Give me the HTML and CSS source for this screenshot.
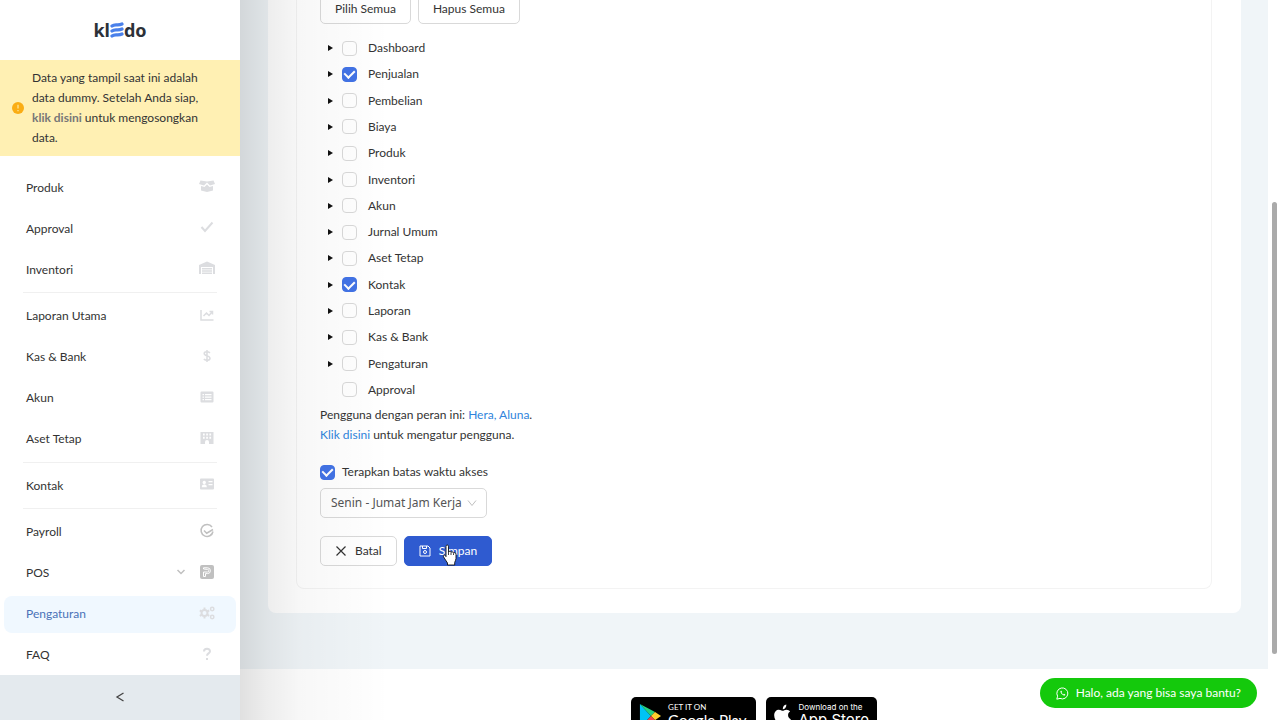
FILE: index.html
```html
<!DOCTYPE html>
<html lang="id">
<head>
  <meta charset="UTF-8" />
  <title>Kledo - Pengaturan Peran</title>
  <meta name="viewport" content="width=device-width, initial-scale=1.0" />
  <link rel="stylesheet" href="styles.css">
</head>
<body>
  <aside class="sidebar">
    <a class="logo" href="#" aria-label="kledo">
      <span>kl</span>
      <svg width="14" height="16" viewBox="0 0 14 16" fill="none" stroke="#4a80ea" stroke-width="3.2" stroke-linecap="round"><path d="M2 4C5 1.500 8 4.200 12 2M2 9C5 6.500 8 9.200 12 7M2 14C5 11.500 8 14.200 12 12"/></svg>
      <span>do</span>
    </a>

    <div class="notice">
      <svg class="notice-icon" width="12" height="12" viewBox="0 0 12 12"><circle cx="6" cy="6" r="6" fill="#faad14"/><path d="M6 2.800v3.800M6 8v1.200" stroke="#fff0b0" stroke-width="1.100"/></svg>
      <p>Data yang tampil saat ini adalah data dummy. Setelah Anda siap, <a href="#">klik disini</a> untuk mengosongkan data.</p>
    </div>

    <nav class="menu">
      <a class="menu-item" href="#"><span>Produk</span>
        <svg viewBox="0 0 16 16"><path d="M1.500 2.500L8 3.500l6.500-1L16 6l-5 1.500L8 4.500l-3 3L0 6zM2 8l3.500 1L8 6.500 10.500 9 14 8v4.500L8 14l-6-1.500z"/></svg></a>
      <a class="menu-item" href="#"><span>Approval</span>
        <svg viewBox="0 0 16 16"><path class="line thick" d="M2.500 8l3.500 4 7.500-8.500"/></svg></a>
      <a class="menu-item" href="#"><span>Inventori</span>
        <svg viewBox="0 0 16 16"><path d="M0 5l8-3.500L16 5v9h-2V7H2v7H0zM3 8h10v1.500H3zM3 10.300h10v1.500H3zM3 12.600h10V14H3z"/></svg></a>
      <hr>
      <a class="menu-item" href="#"><span>Laporan Utama</span>
        <svg viewBox="0 0 16 16"><path class="line" d="M2 3v10h12.500M4.500 9l3-3 2.500 2.500L13 5M10.500 4.500h3v3"/></svg></a>
      <a class="menu-item" href="#"><span>Kas &amp; Bank</span>
        <svg viewBox="0 0 16 16"><path class="line" d="M11 4.800C9 3.200 5.200 3.400 5.200 5.600c0 2.900 5.800 1.600 5.800 4.700 0 2.400-4 2.600-6.200.8M8 2v12"/></svg></a>
      <a class="menu-item" href="#"><span>Akun</span>
        <svg viewBox="0 0 16 16"><path fill-rule="evenodd" d="M2.500 2.500h11a1 1 0 0 1 1 1v9a1 1 0 0 1-1 1h-11a1 1 0 0 1-1-1v-9a1 1 0 0 1 1-1zM3.500 5v1.300H5V5zM6 5v1.300h6.500V5zM3.500 7.500v1.300H5V7.500zM6 7.500v1.300h6.500V7.500zM3.500 10v1.300H5V10zM6 10v1.300h6.500V10z"/></svg></a>
      <a class="menu-item" href="#"><span>Aset Tetap</span>
        <svg viewBox="0 0 16 16"><path fill-rule="evenodd" d="M1.500 2h13v12H10v-2a2 2 0 0 0-4 0v2H1.500zM4 3.500v2h1.700v-2zM7.200 3.500v2h1.700v-2zM10.400 3.500v2h1.700v-2zM4 6.700v2h1.700v-2zM7.200 6.700v2h1.700v-2zM10.400 6.700v2h1.700v-2z"/></svg></a>
      <hr>
      <a class="menu-item" href="#"><span>Kontak</span>
        <svg viewBox="0 0 16 16"><path fill-rule="evenodd" d="M2 2.500h12a1 1 0 0 1 1 1v9a1 1 0 0 1-1 1H2a1 1 0 0 1-1-1v-9a1 1 0 0 1 1-1zM5.200 4.800a1.700 1.700 0 1 0 .1 0zM2.800 11.300h5c0-2-.8-2.700-2.500-2.700s-2.500.7-2.500 2.700zM9.500 5v1.300h4V5zM9.500 8v1.300h4V8z"/></svg></a>
      <hr>
      <a class="menu-item dark" href="#"><span>Payroll</span>
        <svg viewBox="0 0 16 16"><path class="line" d="M13 4a6 6 0 1 0 1 4.500M5 7.500l2.700 2.700L14 6.500"/></svg></a>
      <a class="menu-item dark" href="#"><span>POS</span>
        <svg class="arrow" viewBox="0 0 12 12"><path class="line" d="M2.500 4L6 7.500 9.500 4"/></svg>
        <svg viewBox="0 0 16 16"><rect x="1" y="1" width="14" height="14" rx="2"/><path d="M4.500 5V3.800h4a2.900 2.900 0 0 1 0 5.800H6.500v2.900h-2V8h4a1.200 1.200 0 0 0 0-2.600z" fill="none" stroke="#fff" stroke-width="1"/></svg></a>
      <a class="menu-item active" href="#"><span>Pengaturan</span>
        <svg viewBox="0 0 16 16"><circle class="line thick" cx="5.500" cy="8" r="3"/><path class="line thick" d="M5.500 2.500v2M5.500 11.500v2M.8 5.300l1.700 1M8.500 9.800l1.700 1M.8 10.800l1.700-1M8.500 6.300l1.700-1"/><circle class="line" cx="13.200" cy="4" r="1.700"/><circle class="line" cx="13.200" cy="12" r="1.700"/></svg></a>
      <a class="menu-item" href="#"><span>FAQ</span>
        <svg viewBox="0 0 16 16"><path class="line thick" d="M5 5.500C5 2 11 2 11 5.200 11 7.400 8 7.400 8 9.700M8 12v2"/></svg></a>
    </nav>

    <button class="collapse" type="button" aria-label="Tutup menu">
      <svg width="10" height="10" viewBox="0 0 10 10" fill="none" stroke="#444" stroke-width="1.300"><path d="M8.500 1L2 5l6.500 4"/></svg>
    </button>
  </aside>

  <main class="page">
    <section class="card">
      <form class="role-form">
        <div class="toolbar">
          <button class="btn" type="button">Pilih Semua</button>
          <button class="btn" type="button">Hapus Semua</button>
        </div>

        <ul class="tree">
          <li><i class="caret"></i><label><input type="checkbox">Dashboard</label></li>
          <li><i class="caret"></i><label><input type="checkbox" checked>Penjualan</label></li>
          <li><i class="caret"></i><label><input type="checkbox">Pembelian</label></li>
          <li><i class="caret"></i><label><input type="checkbox">Biaya</label></li>
          <li><i class="caret"></i><label><input type="checkbox">Produk</label></li>
          <li><i class="caret"></i><label><input type="checkbox">Inventori</label></li>
          <li><i class="caret"></i><label><input type="checkbox">Akun</label></li>
          <li><i class="caret"></i><label><input type="checkbox">Jurnal Umum</label></li>
          <li><i class="caret"></i><label><input type="checkbox">Aset Tetap</label></li>
          <li><i class="caret"></i><label><input type="checkbox" checked>Kontak</label></li>
          <li><i class="caret"></i><label><input type="checkbox">Laporan</label></li>
          <li><i class="caret"></i><label><input type="checkbox">Kas &amp; Bank</label></li>
          <li><i class="caret"></i><label><input type="checkbox">Pengaturan</label></li>
          <li><i class="caret none"></i><label><input type="checkbox">Approval</label></li>
        </ul>

        <p class="users">Pengguna dengan peran ini: <a href="#">Hera, Aluna</a>.<br>
          <a href="#">Klik disini</a> untuk mengatur pengguna.</p>

        <label class="limit"><input type="checkbox" checked>Terapkan batas waktu akses</label>

        <div class="select-box">
          <select aria-label="Batas waktu akses">
            <option>Senin - Jumat Jam Kerja</option>
          </select>
          <svg width="10" height="10" viewBox="0 0 10 10" fill="none" stroke="#bfbfbf"><path d="M1 2.500l4 5 4-5"/></svg>
        </div>

        <div class="actions">
          <button class="btn" type="button">
            <svg width="12" height="12" viewBox="0 0 12 12" fill="none" stroke="#333" stroke-width="1.200"><path d="M1.500 1.500l9 9M10.500 1.500l-9 9"/></svg>
            Batal
          </button>
          <button class="btn primary" type="submit">
            <svg width="12" height="12" viewBox="0 0 12 12" fill="none" stroke="#fff"><path d="M1 1h8l2 2v8H1zM3.500 1v2.500h4V1"/><circle cx="6" cy="7" r="1.500"/></svg>
            Simpan
            <svg class="pointer" width="16" height="22" viewBox="0 0 16 22"><path d="M4 2.200C4 .6 6.500.6 6.500 2.200V8c.3-1 2.300-.9 2.500.3.600-.8 2.300-.5 2.500.7.800-.7 2.500-.3 2.500 1.200v4.300c0 1.500-1 2.500-1.300 4V21H5.500v-2c-1-2-3-4-4-6.200-.7-1.500.9-2.300 1.800-1.200l.7 1z" fill="#fff" stroke="#111" stroke-width=".9"/><path d="M6.500 8v3M9 8.500V11M11.500 9.300V11" stroke="#111" stroke-width=".8"/></svg>
          </button>
        </div>
      </form>
    </section>

    <footer class="footer">
      <a class="store google" href="#">
        <svg width="22" height="26" viewBox="0 0 24 26"><path d="M1 0v26l12-13z" fill="#00c3f5"/><path d="M1 0l12 13 4.500-4.500z" fill="#25d080"/><path d="M17.500 8.500L24 13l-6.500 4.500L13 13z" fill="#ffce2e"/><path d="M1 26l12-13 4.500 4.500z" fill="#f0404c"/></svg>
        <span><small>GET IT ON</small><b>Google Play</b></span>
      </a>
      <a class="store apple" href="#">
        <svg width="17" height="24" viewBox="0 0 18 24" fill="#fff"><path d="M9.300 6C9.200 3 11 1.200 13 1c.3 2.600-1.500 4.700-3.700 5zM9.300 7.500c1 0 2-1.100 4-1.100 1.500 0 2.900.8 3.700 2-3.200 2-2.600 6.700.8 8-.8 2.200-2.500 5.100-4.300 5.100-1.500 0-2-.9-3.800-.9s-2.300.9-3.700.9C3.400 21.500.2 16.300.2 12.400c0-4 2.500-6 5-6 1.700 0 3 1.100 4.100 1.100z"/></svg>
        <span><small>Download on the</small><b>App Store</b></span>
      </a>
    </footer>
    <div class="shade"></div>
  </main>

  <div class="scrollbar"></div>
  <a class="chat" href="#">
    <svg width="13" height="13" viewBox="0 0 13 13" fill="none" stroke="#fff"><path d="M.8 12.200l.8-3A5.500 5.500 0 1 1 4 11.400z"/><path d="M4.500 4c-.5 2 2.500 5 4.500 4.500l.3-1L8 6.800l-.8.600L5.500 5.800 6 5l-.5-1.200z" fill="#fff" stroke="none"/></svg>
    Halo, ada yang bisa saya bantu?
  </a>
</body>
</html>
```
FILE: styles.css
```css
* {
  box-sizing: border-box;
}
body {
  margin: 0;
  height: 100vh;
  display: flex;
  overflow: hidden;
  background: #fff;
  color: #333;
  font-family: Lato, "Noto Sans", sans-serif;
  font-size: 12px;
  line-height: 20px;
}
a {
  color: #2f84dc;
  text-decoration: none;
}
p {
  margin: 0;
}
button, select {
  font: inherit;
  color: inherit;
  cursor: pointer;
}

/* sidebar */
.sidebar {
  width: 240px;
  flex: none;
  display: flex;
  flex-direction: column;
  background: #fff;
}
.logo {
  height: 60px;
  display: flex;
  align-items: center;
  justify-content: center;
  color: #2d3138;
  font-family: "Noto Sans", sans-serif;
  font-size: 18px;
  font-weight: 700;
}
.notice {
  display: flex;
  align-items: center;
  gap: 8px;
  padding: 8px 24px 8px 12px;
  background: #fff0b3;
}
.notice-icon {
  flex: none;
}
.notice a {
  color: #777;
  font-weight: 700;
}
.menu {
  flex: 1;
  display: flex;
  flex-direction: column;
  justify-content: space-between;
  padding: 13px 4px 1px;
}
.menu hr {
  width: 194px;
  height: 1px;
  margin: 0 auto;
  border: 0;
  background: #f0f0f0;
}
.menu-item {
  height: 37px;
  display: flex;
  align-items: center;
  gap: 12px;
  padding: 0 21px 0 22px;
  border-radius: 8px;
  color: #333;
}
.menu-item span {
  flex: 1;
}
.menu-item svg {
  width: 16px;
  height: 16px;
  margin-bottom: 3px;
  fill: #dcdde0;
  stroke: none;
  color: #dcdde0;
}
.menu-item .arrow {
  width: 12px;
  height: 12px;
}
.menu-item .line {
  fill: none;
  stroke: currentColor;
  stroke-width: 1.5;
}
.menu-item .thick {
  stroke-width: 2;
}
.menu-item.dark svg {
  fill: #c0c0c0;
  color: #c0c0c0;
}
.menu-item.active {
  background: #f0f8ff;
  color: #4a72b8;
}
.collapse {
  height: 45px;
  border: 0;
  background: #e4eaee;
}

/* content */
.page {
  position: relative;
  flex: 1;
  margin-right: 12px;
  background: #f0f5f8;
  overflow: hidden;
}
.card {
  margin: 0 27px 56px 28px;
  padding: 0 29px 24px 28px;
  background: #fff;
  border-radius: 0 0 8px 8px;
}
.role-form {
  padding: 0 23px 22px;
  border: 1px solid #f3f3f3;
  border-top: 0;
  border-radius: 0 0 8px 8px;
}
.toolbar, .actions {
  display: flex;
  gap: 7px;
}
.toolbar {
  height: 24px;
  align-items: flex-end;
}
.btn {
  position: relative;
  height: 30px;
  display: flex;
  flex: none;
  align-items: center;
  gap: 8px;
  padding: 0 14px;
  border: 1px solid #d9d9d9;
  border-radius: 5px;
  background: #fff;
}
.btn.primary {
  border-color: #2f5bd0;
  background: #2f5bd0;
  color: #fff;
}
.pointer {
  position: absolute;
  left: 37px;
  top: 7px;
}
.tree {
  height: 368px;
  display: grid;
  grid-auto-rows: 1fr;
  margin: 11px 0 2px;
  padding: 0 0 0 8px;
  list-style: none;
}
.tree li {
  display: flex;
  align-items: center;
  gap: 9px;
}
.caret {
  border: 3px solid transparent;
  border-left: 5px solid #111;
  border-right: 0;
}
.caret.none {
  visibility: hidden;
}
.tree label, .limit {
  display: flex;
  align-items: center;
  gap: 11px;
}
.limit {
  gap: 7px;
}
input[type="checkbox"] {
  appearance: none;
  width: 15px;
  height: 15px;
  margin: 0;
  display: flex;
  align-items: center;
  justify-content: center;
  border: 1px solid #d9d9d9;
  border-radius: 4px;
  background: #fff;
}
input[type="checkbox"]:checked {
  border-color: #4273e6;
  background: #4273e6;
}
input[type="checkbox"]:checked::before {
  content: "";
  width: 5px;
  height: 8px;
  margin-bottom: 2px;
  border: solid #fff;
  border-width: 0 2px 2px 0;
  transform: rotate(45deg);
}
.limit {
  width: fit-content;
  margin: 17px 0 6px;
}
.select-box {
  position: relative;
  width: fit-content;
  margin-bottom: 18px;
}
.select-box select {
  appearance: none;
  height: 30px;
  padding: 0 24px 0 10px;
  border: 1px solid #d9d9d9;
  border-radius: 5px;
  background: #fff;
  color: #555;
  font-family: "Noto Sans", sans-serif;
}
.select-box svg {
  position: absolute;
  right: 10px;
  top: 10px;
  pointer-events: none;
}
.footer {
  height: 120px;
  display: flex;
  justify-content: center;
  align-items: flex-start;
  gap: 10px;
  padding-top: 28px;
  background: #fff;
}
.store {
  height: 38px;
  display: flex;
  padding: 6px 8px;
  gap: 7px;
  border-radius: 5px;
  background: #000;
  color: #fff;
  font-family: Lato, sans-serif;
}
.google {
  padding-right: 10px;
}
.store span {
  display: flex;
  flex-direction: column;
  white-space: nowrap;
}
.store small {
  font-size: 8px;
  line-height: 8px;
}
.store b {
  font-size: 15px;
  font-weight: 400;
  line-height: 18px;
}
.apple {
  font-family: Inter, sans-serif;
}
.shade {
  position: absolute;
  inset: 0 auto 0 0;
  width: 150px;
  background: linear-gradient(to right, rgba(0, 0, 0, 0.12), rgba(0, 0, 0, 0.07) 18%, rgba(0, 0, 0, 0.03) 40%, transparent);
  pointer-events: none;
}
.scrollbar {
  position: absolute;
  right: 3px;
  top: 202px;
  width: 5px;
  height: 452px;
  border-radius: 3px;
  background: #aaa;
}
.chat {
  position: absolute;
  right: 23px;
  bottom: 12px;
  height: 30px;
  display: flex;
  align-items: center;
  gap: 7px;
  padding: 0 16px;
  border-radius: 15px;
  background: #14c90c;
  color: #fff;
}
```
